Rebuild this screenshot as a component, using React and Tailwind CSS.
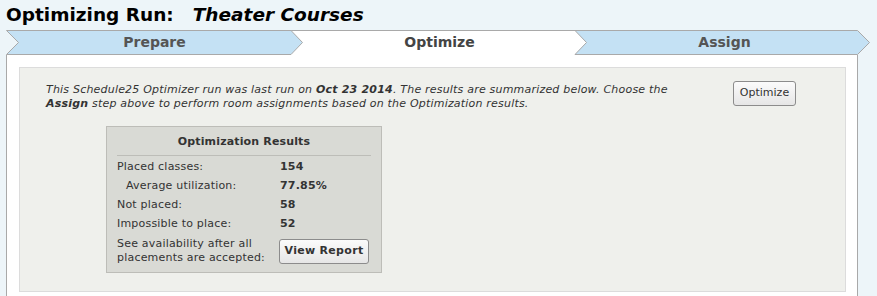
import React from 'react'

const results = [
  { label: 'Placed classes:', value: '154' },
  { label: 'Average utilization:', value: '77.85%', indent: true },
  { label: 'Not placed:', value: '58' },
  { label: 'Impossible to place:', value: '52' },
]

function StepBar() {
  return (
    <div className="relative h-[25px] w-full">
      {/* chevron shapes */}
      <svg className="absolute inset-0" width="877" height="25" viewBox="0 0 877 25">
        <rect x="18" y="0" width="839" height="25" fill="#ffffff" />
        <line x1="291" y1="0.5" x2="575" y2="0.5" stroke="#a9a9a9" />
        <polygon
          points="6.5,0.5 291,0.5 302.5,12.5 291,24.5 6.5,24.5 18.5,12.5"
          fill="#c4e1f4"
          stroke="#a9a9a9"
        />
        <polygon
          points="575,0.5 857.5,0.5 869.5,12.5 857.5,24.5 575,24.5 586.5,12.5"
          fill="#c4e1f4"
          stroke="#a9a9a9"
        />
      </svg>
      <div className="relative flex h-full pl-[12px] text-[14px] font-bold leading-[25px] text-[#555]">
        <div className="w-[285px] text-center">Prepare</div>
        <div className="w-[285px] text-center text-[#444]">Optimize</div>
        <div className="w-[285px] text-center">Assign</div>
      </div>
    </div>
  )
}

export default function App() {
  return (
    <div className="min-h-[296px] bg-[#edf5f9] font-['DejaVu_Sans',Verdana,sans-serif] text-[#333]">
      <h1 className="flex h-[30px] items-center pl-[6px] text-[18.5px] font-bold leading-none text-black">
        <span>Optimizing Run:</span>
        <span className="ml-[19px] italic">Theater Courses</span>
      </h1>

      <StepBar />

      <div className="ml-[6px] w-[852px] border-x border-b border-[#a9a9a9] bg-white pl-[12px] pr-[11px] pt-[12px] pb-[6px]">
        <div className="border border-[#dcdcdc] bg-[#eff0ec] pl-[26px] pt-[14px] pb-[18px]">
          <div className="flex items-start">
            <p className="w-[660px] pt-[1px] text-[11px] italic leading-[14px] tracking-[0.2px] text-[#333]">
              This Schedule25 Optimizer run was last run on <b>Oct 23 2014</b>. The results are summarized
              below. Choose the
              <br />
              <b>Assign</b> step above to perform room assignments based on the Optimization results.
            </p>
            <button className="ml-[27px] -mt-[1px] h-[25px] w-[63px] rounded-[3px] border border-[#8c8c8c] bg-gradient-to-b from-[#fbfbfb] to-[#e6e6e6] text-[11px] text-[#333]">
              Optimize
            </button>
          </div>

          <div className="ml-[60px] mt-[15px] w-[276px] border border-[#bdbdb8] bg-[#d9dad5] px-[10px] pb-[7px]">
            <div className="h-[29px] border-b border-[#bdbdb8] text-center text-[11px] font-bold leading-[29px] tracking-[0.15px] text-[#333]">
              Optimization Results
            </div>
            <div className="mt-[2px] text-[11px] tracking-[0.2px] text-[#333]">
              {results.map((r) => (
                <div key={r.label} className="flex h-[19px] items-center">
                  <span className={r.indent ? 'w-[163px] pl-[9px]' : 'w-[163px]'}>{r.label}</span>
                  <span className="font-bold">{r.value}</span>
                </div>
              ))}
              <div className="flex items-center pt-[3px]">
                <span className="w-[162px] leading-[14px]">
                  See availability after all
                  <br />
                  placements are accepted:
                </span>
                <button className="h-[25px] w-[90px] rounded-[3px] border border-[#8c8c8c] bg-gradient-to-b from-[#fbfbfb] to-[#e6e6e6] text-[11px] font-bold tracking-[0.3px] text-[#333]">
                  View Report
                </button>
              </div>
            </div>
          </div>
        </div>
      </div>
    </div>
  )
}
